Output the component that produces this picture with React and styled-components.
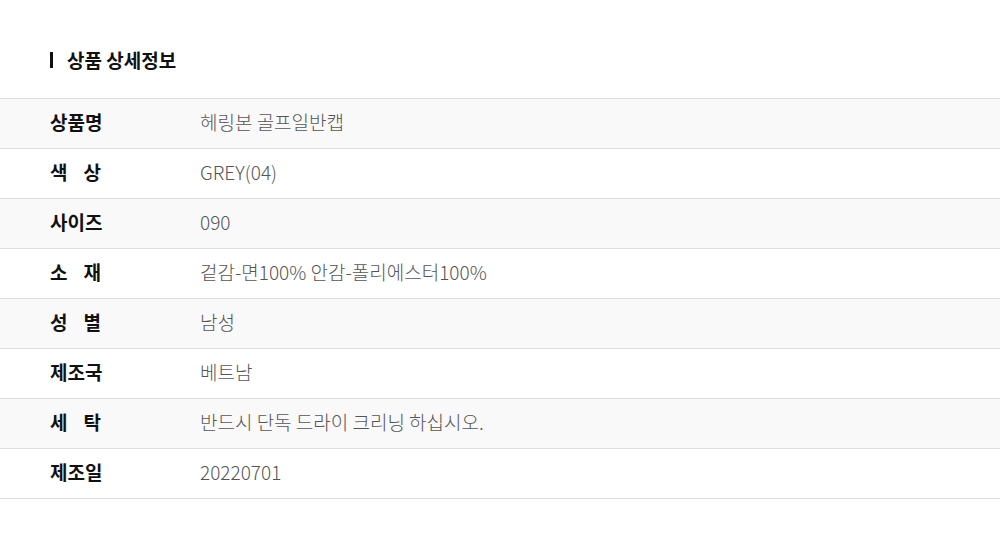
import React from "react";
import styled, { createGlobalStyle } from "styled-components";

const Global = createGlobalStyle`
  html, body { margin: 0; padding: 0; background: #fff; }
  body { font-family: "Noto Sans CJK KR", "Noto Sans", sans-serif; }
`;

const Page = styled.div`
  width: 1000px;
  padding-top: 46px;
`;

const Heading = styled.h2`
  margin: 0 0 24px 50px;
  display: flex;
  align-items: center;
  gap: 14px;
  font-size: 19px;
  font-weight: 700;
  color: #111;
  line-height: 28px;
  &::before {
    content: "";
    width: 3px;
    height: 16px;
    background: #111;
  }
`;

const Table = styled.div`
  border-top: 1px solid #ddd;
`;

const Row = styled.div`
  display: flex;
  align-items: center;
  box-sizing: border-box;
  height: 50px;
  padding-bottom: 5px;
  border-bottom: 1px solid #ddd;
  background: ${(p) => (p.$shade ? "#f9f9f9" : "#fff")};
`;

const Label = styled.div`
  width: 51px;
  margin-left: 50px;
  margin-right: 99px;
  font-size: 19px;
  font-weight: 700;
  color: #111;
  text-align: justify;
  text-align-last: justify;
  white-space: nowrap;
`;

const Value = styled.div`
  font-size: 19px;
  font-weight: 300;
  color: #555;
`;

const rows = [
  ["상품명", "헤링본 골프일반캡"],
  ["색 상", "GREY(04)"],
  ["사이즈", "090"],
  ["소 재", "겉감-면100% 안감-폴리에스터100%"],
  ["성 별", "남성"],
  ["제조국", "베트남"],
  ["세 탁", "반드시 단독 드라이 크리닝 하십시오."],
  ["제조일", "20220701"],
];

export default function App() {
  return (
    <>
      <Global />
      <Page>
        <Heading>상품 상세정보</Heading>
        <Table>
          {rows.map(([k, v], i) => (
            <Row key={k} $shade={i % 2 === 0}>
              <Label>{k}</Label>
              <Value>{v}</Value>
            </Row>
          ))}
        </Table>
      </Page>
    </>
  );
}
